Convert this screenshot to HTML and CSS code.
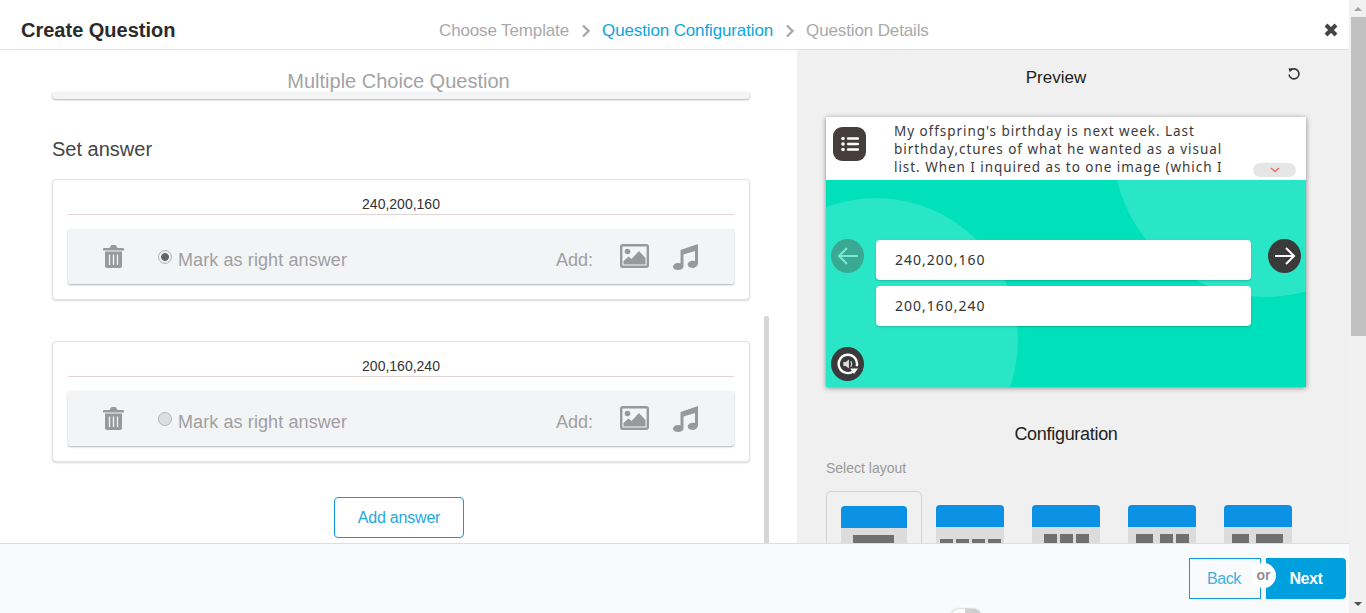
FILE: index.html
```html
<!DOCTYPE html>
<html lang="en">
<head>
  <meta charset="UTF-8">
  <title>Create Question</title>
  <meta name="viewport" content="width=device-width, initial-scale=1.0">
  <link rel="stylesheet" href="styles.css">
</head>
<body>
  <svg class="sprites" width="0" height="0">
    <symbol id="i-trash" viewBox="0 0 21 23">
      <path d="M6.5 3 7.6.9C7.9.3 8.3 0 9 0h3c.7 0 1.100.3 1.400.9L14.500 3H20a1 1 0 0 1 1 1v1.500H0V4a1 1 0 0 1 1-1z"/>
      <path d="M2 6.500h17V21a2 2 0 0 1-2 2H4a2 2 0 0 1-2-2z"/>
      <path d="M6.500 9.500v10.500M10.500 9.500v10.500M14.500 9.500v10.500" stroke="#f3f4f6" stroke-width="1.300" fill="none"/>
    </symbol>
    <symbol id="i-image" viewBox="0 0 29 24">
      <rect x="1.200" y="1.200" width="26.600" height="21.600" rx="1.500" fill="none" stroke="currentColor" stroke-width="2.400"/>
      <circle cx="7.500" cy="7.500" r="2.800"/>
      <path d="M3.500 20.500v-3.500l5-4.500 3 2.500 7.500-8 6.500 7v6.500z"/>
    </symbol>
    <symbol id="i-music" viewBox="0 0 25 26">
      <path d="M7.500 6 25 0v20h-.1c-.3 2.200-2.800 4-5.400 4-2.900 0-4.800-1.600-4.800-3.400 0-2.200 2.500-3.800 5.200-3.800.8 0 1.500.1 2.100.4V7L10.500 10.600V23h-.1c-.3 1.700-2.800 3-5.400 3-2.900 0-5-1.400-5-3.200 0-2.200 2.600-3.800 5.300-3.800.8 0 1.500.1 2.200.4z"/>
    </symbol>
    <symbol id="i-chevron" viewBox="0 0 10 14">
      <path d="M2 1.500 7.500 7 2 12.500" fill="none" stroke="currentColor" stroke-width="2.400"/>
    </symbol>
  </svg>

  <div class="app">
    <header class="topbar">
      <h1 class="topbar-title">Create Question</h1>
      <nav class="steps">
        <span>Choose Template</span>
        <svg class="step-sep"><use href="#i-chevron"/></svg>
        <span class="step-active">Question Configuration</span>
        <svg class="step-sep"><use href="#i-chevron"/></svg>
        <span>Question Details</span>
      </nav>
      <svg class="close-btn" viewBox="0 0 14 14"><path d="M2 2l10 10M12 2 2 12" stroke="currentColor" stroke-width="4" fill="none"/></svg>
    </header>

    <div class="workspace">
      <main class="editor">
        <div class="inner-scroll"></div>
        <p class="template-name">Multiple Choice Question</p>
        <div class="question-card-end"></div>

        <h2 class="set-answer">Set answer</h2>

        <section class="answer-card">
          <div class="answer-input">240,200,160</div>
          <div class="answer-bar">
            <svg class="icon-trash"><use href="#i-trash"/></svg>
            <span class="radio radio-on"></span>
            <span class="mark-label">Mark as right answer</span>
            <span class="add-label">Add:</span>
            <svg class="icon-image"><use href="#i-image"/></svg>
            <svg class="icon-music"><use href="#i-music"/></svg>
          </div>
        </section>

        <section class="answer-card">
          <div class="answer-input">200,160,240</div>
          <div class="answer-bar">
            <svg class="icon-trash"><use href="#i-trash"/></svg>
            <span class="radio"></span>
            <span class="mark-label">Mark as right answer</span>
            <span class="add-label">Add:</span>
            <svg class="icon-image"><use href="#i-image"/></svg>
            <svg class="icon-music"><use href="#i-music"/></svg>
          </div>
        </section>

        <button class="add-answer">Add answer</button>
      </main>

      <aside class="side">
        <div class="preview-head">
          <h2 class="side-title">Preview</h2>
          <svg class="reset-icon" viewBox="0 0 14 14"><path d="M3.200 3.600A5 5 0 1 1 2 7.500" fill="none" stroke="currentColor" stroke-width="1.600"/><path d="M1.500 1.200 6 1.600 2.800 5.200z"/></svg>
        </div>

        <div class="phone">
          <div class="phone-top">
            <div class="q-badge">
              <svg viewBox="0 0 18 16" width="18" height="16"><g fill="#fff"><circle cx="2" cy="2.500" r="1.800"/><circle cx="2" cy="8" r="1.800"/><circle cx="2" cy="13.500" r="1.800"/><rect x="6" y="1.300" width="12" height="2.400" rx="1"/><rect x="6" y="6.800" width="12" height="2.400" rx="1"/><rect x="6" y="12.300" width="12" height="2.400" rx="1"/></g></svg>
            </div>
            <p class="q-text">My offspring's birthday is next week. Last birthday,ctures of what he wanted as a visual list. When I inquired as to one image (which I</p>
            <div class="q-more"><svg viewBox="0 0 10 6" width="10" height="6"><path d="M1 1l4 3.500L9 1" fill="none" stroke="#f46a6a" stroke-width="1.600"/></svg></div>
          </div>
          <div class="stage">
            <div class="blob blob-right"></div>
            <div class="blob blob-left"></div>
            <div class="round-btn nav-prev"><svg viewBox="0 0 24 24" width="24" height="24"><path d="M22 12H3M11 4l-8 8 8 8" fill="none" stroke="#7ce8d2" stroke-width="2"/></svg></div>
            <div class="round-btn nav-next"><svg viewBox="0 0 24 24" width="24" height="24"><path d="M2 12h19M13 4l8 8-8 8" fill="none" stroke="#fff" stroke-width="2"/></svg></div>
            <div class="options">
              <div class="option">240,200,160</div>
              <div class="option">200,160,240</div>
            </div>
            <div class="round-btn audio-btn">
              <svg viewBox="0 0 24 24" width="22" height="22"><path d="M17 20.500A10 10 0 1 1 21.500 14.500" fill="none" stroke="#fff" stroke-width="2.600"/><path d="M14.500 17h8.500l-4.500 6z" fill="#fff"/><path d="M7 9.800v4.400h2.600l3.400 2.800V7l-3.400 2.800z" fill="#ddd"/><path d="M15 9c1.200 1.800 1.200 4.200 0 6" fill="none" stroke="#ddd" stroke-width="1.200"/></svg>
            </div>
          </div>
        </div>

        <h2 class="side-title config-title">Configuration</h2>
        <p class="select-label">Select layout</p>
        <div class="layouts">
          <div class="layout layout-selected"><div class="thumb"><div class="thumb-head"></div><div class="cells cells-a"><i></i></div></div></div>
          <div class="layout"><div class="thumb"><div class="thumb-head"></div><div class="cells cells-b"><i></i><i></i><i></i><i></i></div></div></div>
          <div class="layout"><div class="thumb"><div class="thumb-head"></div><div class="cells cells-c"><i></i><i></i><i></i></div></div></div>
          <div class="layout"><div class="thumb"><div class="thumb-head"></div><div class="cells cells-d"><i></i><i></i><i></i></div></div></div>
          <div class="layout"><div class="thumb"><div class="thumb-head"></div><div class="cells cells-e"><i></i><i></i></div></div></div>
        </div>
      </aside>
    </div>

    <footer class="footer">
      <div class="toggle"></div>
      <div class="footer-btns">
        <button class="btn-back">Back</button>
        <span class="btn-or">or</span>
        <button class="btn-next">Next</button>
      </div>
    </footer>
  </div>

  <div class="page-scroll">
    <span class="arrow-up"></span>
    <div class="page-thumb"></div>
    <span class="arrow-down"></span>
  </div>
</body>
</html>
```

FILE: styles.css
```css
* {
  box-sizing: border-box;
}

html, body {
  height: 100%;
}

body {
  margin: 0;
  display: flex;
  overflow: hidden;
  font-family: "Liberation Sans", Arial, sans-serif;
  background: #fff;
  color: #333;
}

.sprites {
  position: absolute;
}

.app {
  width: 1349px;
  height: 613px;
  display: flex;
  flex-direction: column;
}

/* top bar */
.topbar {
  height: 50px;
  flex: none;
  display: flex;
  align-items: center;
  padding: 11px 0 0 21px;
  background: #fff;
  border-bottom: 1px solid #e0e0e0;
}

.topbar-title {
  width: 418px;
  margin: 0;
  font-size: 20px;
  font-weight: bold;
  color: #2b2b2b;
}

.steps {
  display: flex;
  align-items: center;
  margin-top: 1px;
  font-size: 17px;
  letter-spacing: -0.13px;
  color: #a9a9a9;
}

.step-active {
  color: #0ea5dc;
}

.step-sep {
  width: 10px;
  height: 14px;
  margin: 0 11px 0 12px;
  color: #a9a9a9;
}

.close-btn {
  width: 14px;
  height: 14px;
  margin-left: auto;
  margin-right: 11px;
  color: #444;
}

.workspace {
  flex: 1;
  min-height: 0;
  display: flex;
}

/* left column */
.editor {
  position: relative;
  width: 797px;
  padding: 0 47px 0 52px;
  overflow: hidden;
  background: #fff;
}

.inner-scroll {
  position: absolute;
  left: 764px;
  top: 266px;
  width: 5px;
  height: 240px;
  border-radius: 2px;
  background: #d6d6d6;
}

.template-name {
  margin: 18px 5px 0 0;
  height: 24px;
  line-height: 26px;
  text-align: center;
  font-size: 20px;
  color: #a3a3a3;
}

.question-card-end {
  height: 7px;
  background: #f3f4f6;
  border-radius: 0 0 4px 4px;
  box-shadow: 0 1px 2px rgba(0, 0, 0, 0.3);
}

.set-answer {
  margin: 37px 0 17px;
  font-size: 20px;
  line-height: 26px;
  font-weight: normal;
  color: #444;
}

.answer-card {
  height: 121px;
  margin-bottom: 41px;
  padding: 0 15px;
  background: #fff;
  border: 1px solid #e2e2e2;
  border-radius: 4px;
  box-shadow: 0 1px 2px rgba(0, 0, 0, 0.15);
}

.answer-input {
  height: 35px;
  margin-bottom: 14px;
  padding-top: 16px;
  line-height: 17px;
  text-align: center;
  font-size: 14px;
  color: #333;
  border-bottom: 1px solid #e3d3d3;
}

.answer-bar {
  height: 55px;
  display: flex;
  align-items: center;
  padding: 0 36px 1px 35px;
  background: #f3f4f6;
  border-radius: 2px;
  box-shadow: 0 1px 2px rgba(0, 0, 0, 0.3);
  color: #a0a0a0;
  font-size: 18px;
}

.answer-bar svg {
  fill: #999;
  color: #999;
  flex: none;
}

.mark-label, .add-label {
  margin-top: 9px;
}

.mark-label {
  letter-spacing: 0.1px;
}

.icon-trash {
  width: 21px;
  height: 23px;
}

.radio {
  width: 14px;
  height: 14px;
  margin: 2px 6px 0 34px;
  border: 1px solid #b5b5b5;
  border-radius: 50%;
  background: #ddd;
}

.radio-on {
  background: radial-gradient(circle, #666 0, #666 3.500px, #eee 4.200px);
}

.add-label {
  margin-left: auto;
}

.icon-image {
  width: 29px;
  height: 24px;
  margin-left: 27px;
}

.icon-music {
  width: 25px;
  height: 26px;
  margin: 1px 0 0 24px;
}

.add-answer {
  display: block;
  width: 130px;
  height: 41px;
  margin: -6px auto 0 282px;
  padding: 0;
  font: 16px "Liberation Sans", Arial, sans-serif;
  letter-spacing: -0.2px;
  color: #1fa8de;
  background: #fff;
  border: 1px solid #0e9bd6;
  border-radius: 4px;
}

/* right column */
.side {
  flex: 1;
  min-width: 0;
  padding: 0 43px 0 29px;
  overflow: hidden;
  background: #f0f0f0;
}

.preview-head {
  position: relative;
  height: 67px;
}

.side-title {
  margin: 0;
  font-size: 17px;
  font-weight: normal;
  text-align: center;
  color: #222;
}

.preview-head .side-title {
  padding-top: 18px;
  line-height: 20px;
  margin-left: -20px;
}

.reset-icon {
  position: absolute;
  left: 461px;
  top: 17px;
  width: 14px;
  height: 14px;
  color: #333;
  fill: #333;
}

.phone {
  width: 480px;
  height: 270px;
  display: flex;
  flex-direction: column;
  box-shadow: 0 1px 5px rgba(0, 0, 0, 0.45);
}

.phone-top {
  position: relative;
  height: 63px;
  display: flex;
  background: #fff;
}

.q-badge {
  width: 33px;
  height: 34px;
  margin: 10px 0 0 7px;
  display: flex;
  align-items: center;
  justify-content: center;
  flex: none;
  border-radius: 9px;
  background: #453e3c;
}

.q-text {
  width: 345px;
  height: 54px;
  margin: 5px 0 0 28px;
  overflow: hidden;
  font-family: "Noto Sans", sans-serif;
  font-size: 13.5px;
  line-height: 18px;
  letter-spacing: 0.95px;
  color: #3a3a3a;
}

.q-more {
  position: absolute;
  left: 427px;
  top: 46px;
  width: 43px;
  height: 14px;
  display: flex;
  align-items: center;
  justify-content: center;
  border-radius: 7px;
  background: #e6e6e6;
}

.stage {
  position: relative;
  flex: 1;
  overflow: hidden;
  background: #00e0bb;
}

.blob {
  position: absolute;
  border-radius: 50%;
  background: #29e6c6;
}

.blob-right {
  left: 287px;
  top: -187px;
  width: 304px;
  height: 304px;
}

.blob-left {
  left: -92px;
  top: 18px;
  width: 284px;
  height: 284px;
}

.round-btn {
  position: absolute;
  width: 33px;
  height: 34px;
  display: flex;
  align-items: center;
  justify-content: center;
  border-radius: 50%;
  background: #3a3a3a;
}

.nav-prev {
  left: 5px;
  top: 59px;
  background: #3aa993;
}

.nav-next {
  left: 442px;
  top: 59px;
}

.audio-btn {
  left: 5px;
  top: 167px;
}

.options {
  position: relative;
  margin: 60px 55px 0 50px;
  display: flex;
  flex-direction: column;
  gap: 6px;
}

.option {
  height: 40px;
  padding-left: 19px;
  line-height: 40px;
  font-family: "Noto Sans", sans-serif;
  font-size: 14px;
  letter-spacing: 1px;
  color: #333;
  background: #fff;
  border-radius: 4px;
  box-shadow: 0 1px 2px rgba(0, 0, 0, 0.2);
}

.config-title {
  margin: 36px 0 0;
  line-height: 22px;
  font-size: 18px;
  letter-spacing: -0.3px;
}

.select-label {
  margin: 15px 0 0;
  line-height: 17px;
  font-size: 14px;
  color: #999;
}

.layouts {
  display: flex;
  margin-top: 14px;
}

.layout {
  width: 96px;
  height: 90px;
  flex: none;
  padding: 14px 14px 0 14px;
  border: 1px solid transparent;
  border-radius: 5px 5px 0 0;
}

.layout + .layout {
  padding: 13px 13px 0 13px;
}

.layout-selected {
  border-color: #d3d3d3;
}

.layout-selected .thumb {
  width: 66px;
}

.thumb {
  width: 68px;
  height: 70px;
  background: #dcdcdc;
  border-radius: 4px 4px 0 0;
  overflow: hidden;
}

.thumb-head {
  height: 22px;
  background: #0b92e4;
}

.cells {
  display: flex;
  padding-top: 7px;
}

.cells i {
  height: 20px;
  background: #707070;
}

.cells-a {
  padding-left: 12px;
}

.cells-a i {
  width: 41px;
}

.cells-b {
  padding: 12px 0 0 4px;
  gap: 3px;
}

.cells-b i {
  width: 13px;
}

.cells-c {
  padding-left: 12px;
  gap: 3px;
}

.cells-c i {
  width: 13px;
}

.cells-d {
  padding-left: 8px;
}

.cells-d i {
  width: 13px;
  margin-right: 3px;
}

.cells-d i:first-child {
  width: 17px;
  margin-right: 7px;
}

.cells-e {
  padding-left: 8px;
  gap: 7px;
}

.cells-e i {
  width: 17px;
}

.cells-e i:last-child {
  width: 27px;
}

/* bottom bar */
.footer {
  position: relative;
  height: 70px;
  flex: none;
  overflow: hidden;
  background: #f9fafc;
  border-top: 1px solid #dedede;
  display: flex;
  justify-content: flex-end;
  padding: 14px 3px 0 0;
}

.footer-btns {
  position: relative;
  display: flex;
  gap: 5px;
  height: 41px;
}

.btn-back, .btn-next {
  font: 16px "Liberation Sans", Arial, sans-serif;
  padding: 0;
  height: 41px;
  letter-spacing: -0.4px;
}

.btn-back {
  width: 72px;
  color: #3fb0e0;
  background: transparent;
  border: 1px solid #0e9bd6;
  padding-right: 2px;
}

.btn-next {
  width: 80px;
  color: #fff;
  font-weight: bold;
  background: #009fdd;
  border: none;
  border-radius: 0 4px 4px 0;
}

.btn-or {
  position: absolute;
  left: 62px;
  top: 5px;
  width: 25px;
  height: 25px;
  line-height: 25px;
  text-align: center;
  font-size: 14px;
  font-weight: bold;
  color: #8f8f8f;
  background: #fff;
  border-radius: 50%;
}

.toggle {
  position: absolute;
  left: 951px;
  top: 65px;
  width: 30px;
  height: 16px;
  border-radius: 8px;
  background: #cfcfcf;
  border-left: 14px solid #fff;
  box-shadow: 0 0 2px rgba(0, 0, 0, 0.4);
}

/* page scrollbar */
.page-scroll {
  position: relative;
  width: 17px;
  height: 613px;
  flex: none;
  background: #f1f1f1;
}

.page-thumb {
  position: absolute;
  left: 2px;
  right: 0;
  top: 17px;
  height: 319px;
  background: #c1c1c1;
}

.arrow-up, .arrow-down {
  position: absolute;
  left: 5px;
  border-left: 4px solid transparent;
  border-right: 4px solid transparent;
}

.arrow-up {
  top: 7px;
  border-bottom: 4px solid #a3a3a3;
}

.arrow-down {
  bottom: 7px;
  border-top: 4px solid #505050;
}
```
